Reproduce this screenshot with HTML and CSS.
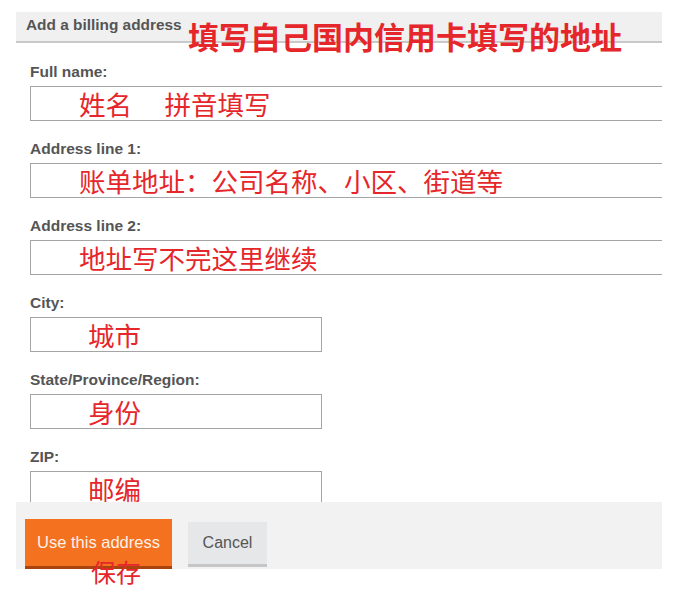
FILE: index.html
```html
<!DOCTYPE html>
<html lang="zh-CN">
<head>
    <meta charset="UTF-8">
    <meta name="viewport" content="width=device-width, initial-scale=1.0">
    <title>Add a billing address</title>

    <link rel="stylesheet" href="styles.css">
</head>
<body>

    <div class="dialog">
        <div class="dialog-head">
            <h2>Add a billing address</h2>
            <span class="note note-title">填写自己国内信用卡填写的地址</span>
        </div>

        <div class="dialog-body">
            <div class="field">
                <label for="fullName">Full name:</label>
                <input id="fullName" class="wide" value="姓名　 拼音填写">
            </div>
            <div class="field">
                <label for="line1">Address line 1:</label>
                <input id="line1" class="wide" value="账单地址：公司名称、小区、街道等">
            </div>
            <div class="field">
                <label for="line2">Address line 2:</label>
                <input id="line2" class="wide" value="地址写不完这里继续">
            </div>
            <div class="field">
                <label for="city">City:</label>
                <input id="city" class="narrow" value="城市">
            </div>
            <div class="field">
                <label for="region">State/Province/Region:</label>
                <input id="region" class="narrow" value="身份">
            </div>
            <div class="field">
                <label for="zip">ZIP:</label>
                <input id="zip" class="narrow focused" value="邮编">
            </div>
        </div>

        <div class="dialog-foot">
            <button class="btn-primary">Use this address</button>
            <button class="btn-cancel">Cancel</button>
        </div>
        <div class="save-row">
            <span class="note-save">保存</span>
        </div>
    </div>

</body>
</html>
```

FILE: styles.css
```css
* {
    padding: 0;
    margin: 0;
    box-sizing: border-box;
}

body {
    background-color: #fff;
    font-family: "Liberation Sans", Arial, sans-serif;
}

.dialog {
    margin: 12px 0 0 16px;
    width: 646px;
}

.dialog-head {
    position: relative;
    height: 31px;
    background-color: #f0f0f0;
    border-bottom: 2px solid #c9c9c9;
    padding-left: 10px;
}

.dialog-head h2 {
    font-size: 15.4px;
    font-weight: bold;
    color: #555;
    line-height: 25px;
}

.note-title {
    position: absolute;
    left: 172px;
    top: 8px;
    color: #e5262a;
    font-family: "Noto Sans CJK SC", sans-serif;
    font-size: 31px;
    font-weight: bold;
    line-height: 31px;
    white-space: nowrap;
}

.dialog-body {
    height: 459px;
    overflow: hidden;
    padding: 21px 0 0 14px;
}

.field {
    margin-bottom: 20px;
}

.field label {
    display: block;
    font-size: 15.5px;
    font-weight: bold;
    color: #555;
    line-height: 16px;
    margin-bottom: 6px;
}

.field input {
    display: block;
    height: 35px;
    border: 1px solid #a5a5a5;
    font-family: "Noto Sans CJK SC", sans-serif;
    font-size: 26.5px;
    color: #e5262a;
    background-color: #fff;
    outline: none;
}

.wide {
    width: 660px;
    padding-left: 48px;
}

.narrow {
    width: 292px;
    padding-left: 57px;
}

.focused {
    border-color: #eea44a;
}

.dialog-foot {
    height: 67px;
    background-color: #f2f2f2;
    display: flex;
    align-items: flex-end;
    gap: 16px;
    padding-left: 9px;
}

.btn-primary {
    width: 147px;
    height: 50px;
    background-color: #f4721f;
    color: #fdf1e8;
    border: none;
    border-bottom: 3px solid #a9440f;
    font-family: "Liberation Sans", Arial, sans-serif;
    font-size: 16.5px;
    cursor: pointer;
}

.btn-cancel {
    width: 79px;
    height: 45px;
    margin-bottom: 2px;
    background-color: #e6e7e9;
    color: #555;
    border: none;
    border-bottom: 3px solid #c6c6c6;
    font-family: "Liberation Sans", Arial, sans-serif;
    font-size: 16px;
    cursor: pointer;
}

.save-row {
    height: 30px;
    margin-top: -12px;
    padding-left: 75px;
    position: relative;
}

.note-save {
    color: #e5262a;
    font-family: "Noto Sans CJK SC", sans-serif;
    font-size: 25px;
    line-height: 28px;
}
```
